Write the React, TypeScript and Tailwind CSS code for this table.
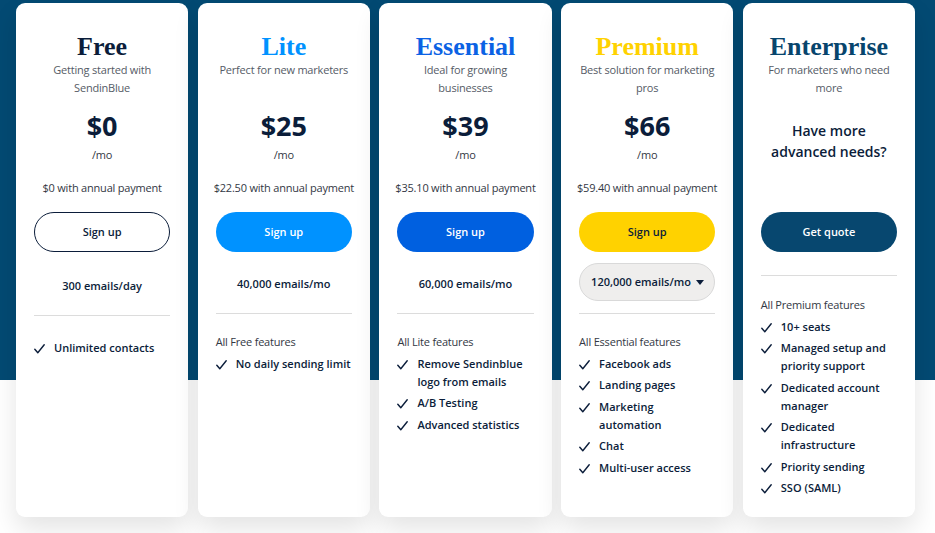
import React from 'react';

type Plan = {
  name: string;
  titleColor: string;
  subtitle: string[];
  price?: string;
  annual?: string;
  button: string;
  buttonClass: string;
  volume?: string;
  select?: boolean;
  header?: string;
  features: string[][];
};

const plans: Plan[] = [
  {
    name: 'Free',
    titleColor: 'text-[#0b1d3a]',
    subtitle: ['Getting started with', 'SendinBlue'],
    price: '$0',
    annual: '$0 with annual payment',
    button: 'Sign up',
    buttonClass: 'border border-[#0b1d3a] bg-white text-[#0b1d3a]',
    volume: '300 emails/day',
    features: [['Unlimited contacts']],
  },
  {
    name: 'Lite',
    titleColor: 'text-[#0092ff]',
    subtitle: ['Perfect for new marketers'],
    price: '$25',
    annual: '$22.50 with annual payment',
    button: 'Sign up',
    buttonClass: 'bg-[#0092ff] text-white',
    volume: '40,000 emails/mo',
    header: 'All Free features',
    features: [['No daily sending limit']],
  },
  {
    name: 'Essential',
    titleColor: 'text-[#0b62e4]',
    subtitle: ['Ideal for growing', 'businesses'],
    price: '$39',
    annual: '$35.10 with annual payment',
    button: 'Sign up',
    buttonClass: 'bg-[#0060e0] text-white',
    volume: '60,000 emails/mo',
    header: 'All Lite features',
    features: [['Remove Sendinblue', 'logo from emails'], ['A/B Testing'], ['Advanced statistics']],
  },
  {
    name: 'Premium',
    titleColor: 'text-[#ffd200]',
    subtitle: ['Best solution for marketing', 'pros'],
    price: '$66',
    annual: '$59.40 with annual payment',
    button: 'Sign up',
    buttonClass: 'bg-[#ffd200] text-[#0b1d3a]',
    volume: '120,000 emails/mo',
    select: true,
    header: 'All Essential features',
    features: [['Facebook ads'], ['Landing pages'], ['Marketing', 'automation'], ['Chat'], ['Multi-user access']],
  },
  {
    name: 'Enterprise',
    titleColor: 'text-[#07456d]',
    subtitle: ['For marketers who need', 'more'],
    button: 'Get quote',
    buttonClass: 'bg-[#07476f] text-white',
    header: 'All Premium features',
    features: [
      ['10+ seats'],
      ['Managed setup and', 'priority support'],
      ['Dedicated account', 'manager'],
      ['Dedicated', 'infrastructure'],
      ['Priority sending'],
      ['SSO (SAML)'],
    ],
  },
];

function Check() {
  return (
    <svg width="11" height="10" viewBox="0 0 11 10" className="mt-[5px] shrink-0" aria-hidden>
      <path d="M0.8 5.2 L3.8 8.8 L10.2 0.8" fill="none" stroke="#0b1d3a" strokeWidth="1.4" strokeLinecap="round" strokeLinejoin="round" />
    </svg>
  );
}

function Card({ plan }: { plan: Plan }) {
  const isFree = plan.name === 'Free';
  const isEnterprise = plan.name === 'Enterprise';
  return (
    <div className="flex h-[514px] flex-col rounded-[9px] bg-white px-[18px] pt-[29px] shadow-[0_12px_26px_rgba(0,0,0,0.11)]">
      <h2 className={`h-[30px] text-center font-['Liberation_Serif',serif] text-[26px] font-bold leading-[30px] ${plan.titleColor}`}>
        {plan.name}
      </h2>
      <div className="-mt-px h-[36px] text-center text-[11px] leading-[18px] tracking-[-0.2px] text-[#555b66]">
        {plan.subtitle.map((s) => (
          <div key={s}>{s}</div>
        ))}
      </div>

      {isEnterprise ? (
        <div className="mt-[23px] h-[92px] text-center text-[14px] font-semibold leading-[21px] text-[#0b1d3a]">
          Have more
          <br />
          advanced needs?
        </div>
      ) : (
        <div className="h-[115px] text-center">
          <div className="mt-[12px] h-[34px] text-[27px] font-bold leading-[34px] text-[#0b1d3a]">{plan.price}</div>
          <div className="mt-[3px] text-[11px] leading-[18px] tracking-[-0.2px] text-[#333844]">/mo</div>
          <div className="-mx-[6px] mt-[15px] whitespace-nowrap text-[11px] leading-[18px] tracking-[-0.2px] text-[#333844]">
            {plan.annual}
          </div>
        </div>
      )}

      <button className={`h-[40px] w-full rounded-full text-[11px] font-semibold ${plan.buttonClass}`}>{plan.button}</button>

      {plan.volume &&
        (plan.select ? (
          <div className="mt-[11px] flex h-[38px] items-center justify-between rounded-full border border-[#d9d9d9] bg-[#efeeed] pl-[11px] pr-[10px] text-[11px] font-semibold text-[#0b1d3a]">
            <span>{plan.volume}</span>
            <svg width="8" height="5" viewBox="0 0 8 5" aria-hidden>
              <path d="M0 0 H8 L4 5 Z" fill="#0b1d3a" />
            </svg>
          </div>
        ) : (
          <div
            className={`flex h-[38px] items-center justify-center pt-[4px] text-[11px] font-semibold text-[#0b1d3a] ${
              isFree ? 'mt-[13px]' : 'mt-[11px]'
            }`}
          >
            {plan.volume}
          </div>
        ))}

      <div className={`h-px bg-[#dcdcdc] ${isEnterprise ? 'mt-[23px]' : 'mt-[12px]'}`} />

      <div className={`flex flex-col gap-[3.5px] ${isFree ? 'mt-[23px]' : isEnterprise ? 'mt-[20px]' : 'mt-[19px]'}`}>
        {plan.header && <div className="text-[11px] leading-[18px] tracking-[-0.2px] text-[#333844]">{plan.header}</div>}
        {plan.features.map((f) => (
          <div key={f[0]} className="flex gap-[9px]">
            <Check />
            <div className="text-[11px] font-semibold leading-[18px] text-[#0b1d3a]">
              {f.map((l) => (
                <div key={l}>{l}</div>
              ))}
            </div>
          </div>
        ))}
      </div>
    </div>
  );
}

export default function App() {
  return (
    <main className="h-[533px] w-[935px] overflow-hidden bg-[linear-gradient(to_bottom,#034a73_380px,#ffffff_380px)] pl-[16px] pt-[3px] font-['Open_Sans',sans-serif]">
      <div className="grid w-[899px] grid-cols-5 gap-[9.5px]">
        {plans.map((p) => (
          <Card key={p.name} plan={p} />
        ))}
      </div>
    </main>
  );
}
